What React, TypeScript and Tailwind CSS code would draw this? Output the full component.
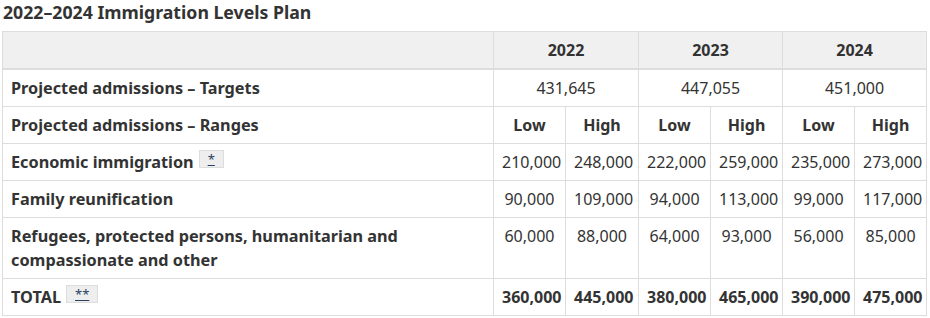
const years = ['2022', '2023', '2024']
const targets = ['431,645', '447,055', '451,000']

type Row = { label: string; note?: string; values: string[]; total?: boolean }

const rows: Row[] = [
  {
    label: 'Economic immigration',
    note: '*',
    values: ['210,000', '248,000', '222,000', '259,000', '235,000', '273,000'],
  },
  {
    label: 'Family reunification',
    values: ['90,000', '109,000', '94,000', '113,000', '99,000', '117,000'],
  },
  {
    label: 'Refugees, protected persons, humanitarian and compassionate and other',
    values: ['60,000', '88,000', '64,000', '93,000', '56,000', '85,000'],
  },
  {
    label: 'TOTAL',
    note: '**',
    total: true,
    values: ['360,000', '445,000', '380,000', '465,000', '390,000', '475,000'],
  },
]

const cell = 'border border-[#ddd] px-2 py-[6px] align-top leading-6'

const Note = ({ mark }: { mark: string }) => (
  <span className="ml-[5px] inline-block align-[4px] h-[18px] px-[8px] bg-[#eee] border border-[#ddd] text-[13px] leading-[16px] font-normal text-[#284162] underline">
    {mark}
  </span>
)

const App = () => {
  return (
    <div
      className="w-[930px] h-[318px] bg-white text-[#333] pl-[2px]"
      style={{ fontFamily: '"Noto Sans", sans-serif' }}
    >
      <h2 className="text-[17.7px] font-bold leading-6 mb-[7px] pl-[1px]">
        2022–2024 Immigration Levels Plan
      </h2>
      <table className="table-fixed border-collapse text-[16px] w-[925px]">
        <colgroup>
          <col className="w-[491px]" />
          <col className="w-[72px]" />
          <col className="w-[73px]" />
          <col className="w-[72px]" />
          <col className="w-[72px]" />
          <col className="w-[72px]" />
          <col className="w-[72px]" />
        </colgroup>
        <thead>
          <tr className="bg-[#f0f0f0]">
            <th className={`${cell} border-b-2`}></th>
            {years.map((y) => (
              <th key={y} colSpan={2} className={`${cell} border-b-2 text-center font-bold`}>
                {y}
              </th>
            ))}
          </tr>
        </thead>
        <tbody>
          <tr>
            <th className={`${cell} text-left font-bold text-[16.25px]`}>
              Projected admissions – Targets
            </th>
            {targets.map((t) => (
              <td key={t} colSpan={2} className={`${cell} text-center`}>
                {t}
              </td>
            ))}
          </tr>
          <tr>
            <th className={`${cell} text-left font-bold text-[16.25px]`}>
              Projected admissions – Ranges
            </th>
            {years.map((y) => [
              <th key={`${y}l`} className={`${cell} text-center font-bold`}>
                Low
              </th>,
              <th key={`${y}h`} className={`${cell} text-center font-bold`}>
                High
              </th>,
            ])}
          </tr>
          {rows.map((row) => (
            <tr key={row.label}>
              <th className={`${cell} text-left font-bold text-[16.25px]`}>
                {row.label}
                {row.note && <Note mark={row.note} />}
              </th>
              {row.values.map((v, i) => (
                <td
                  key={`${row.label}${i}`}
                  className={`${cell} text-center whitespace-nowrap px-0 ${row.total ? 'font-bold' : ''}`}
                >
                  {v}
                </td>
              ))}
            </tr>
          ))}
        </tbody>
      </table>
    </div>
  )
}

export default App
